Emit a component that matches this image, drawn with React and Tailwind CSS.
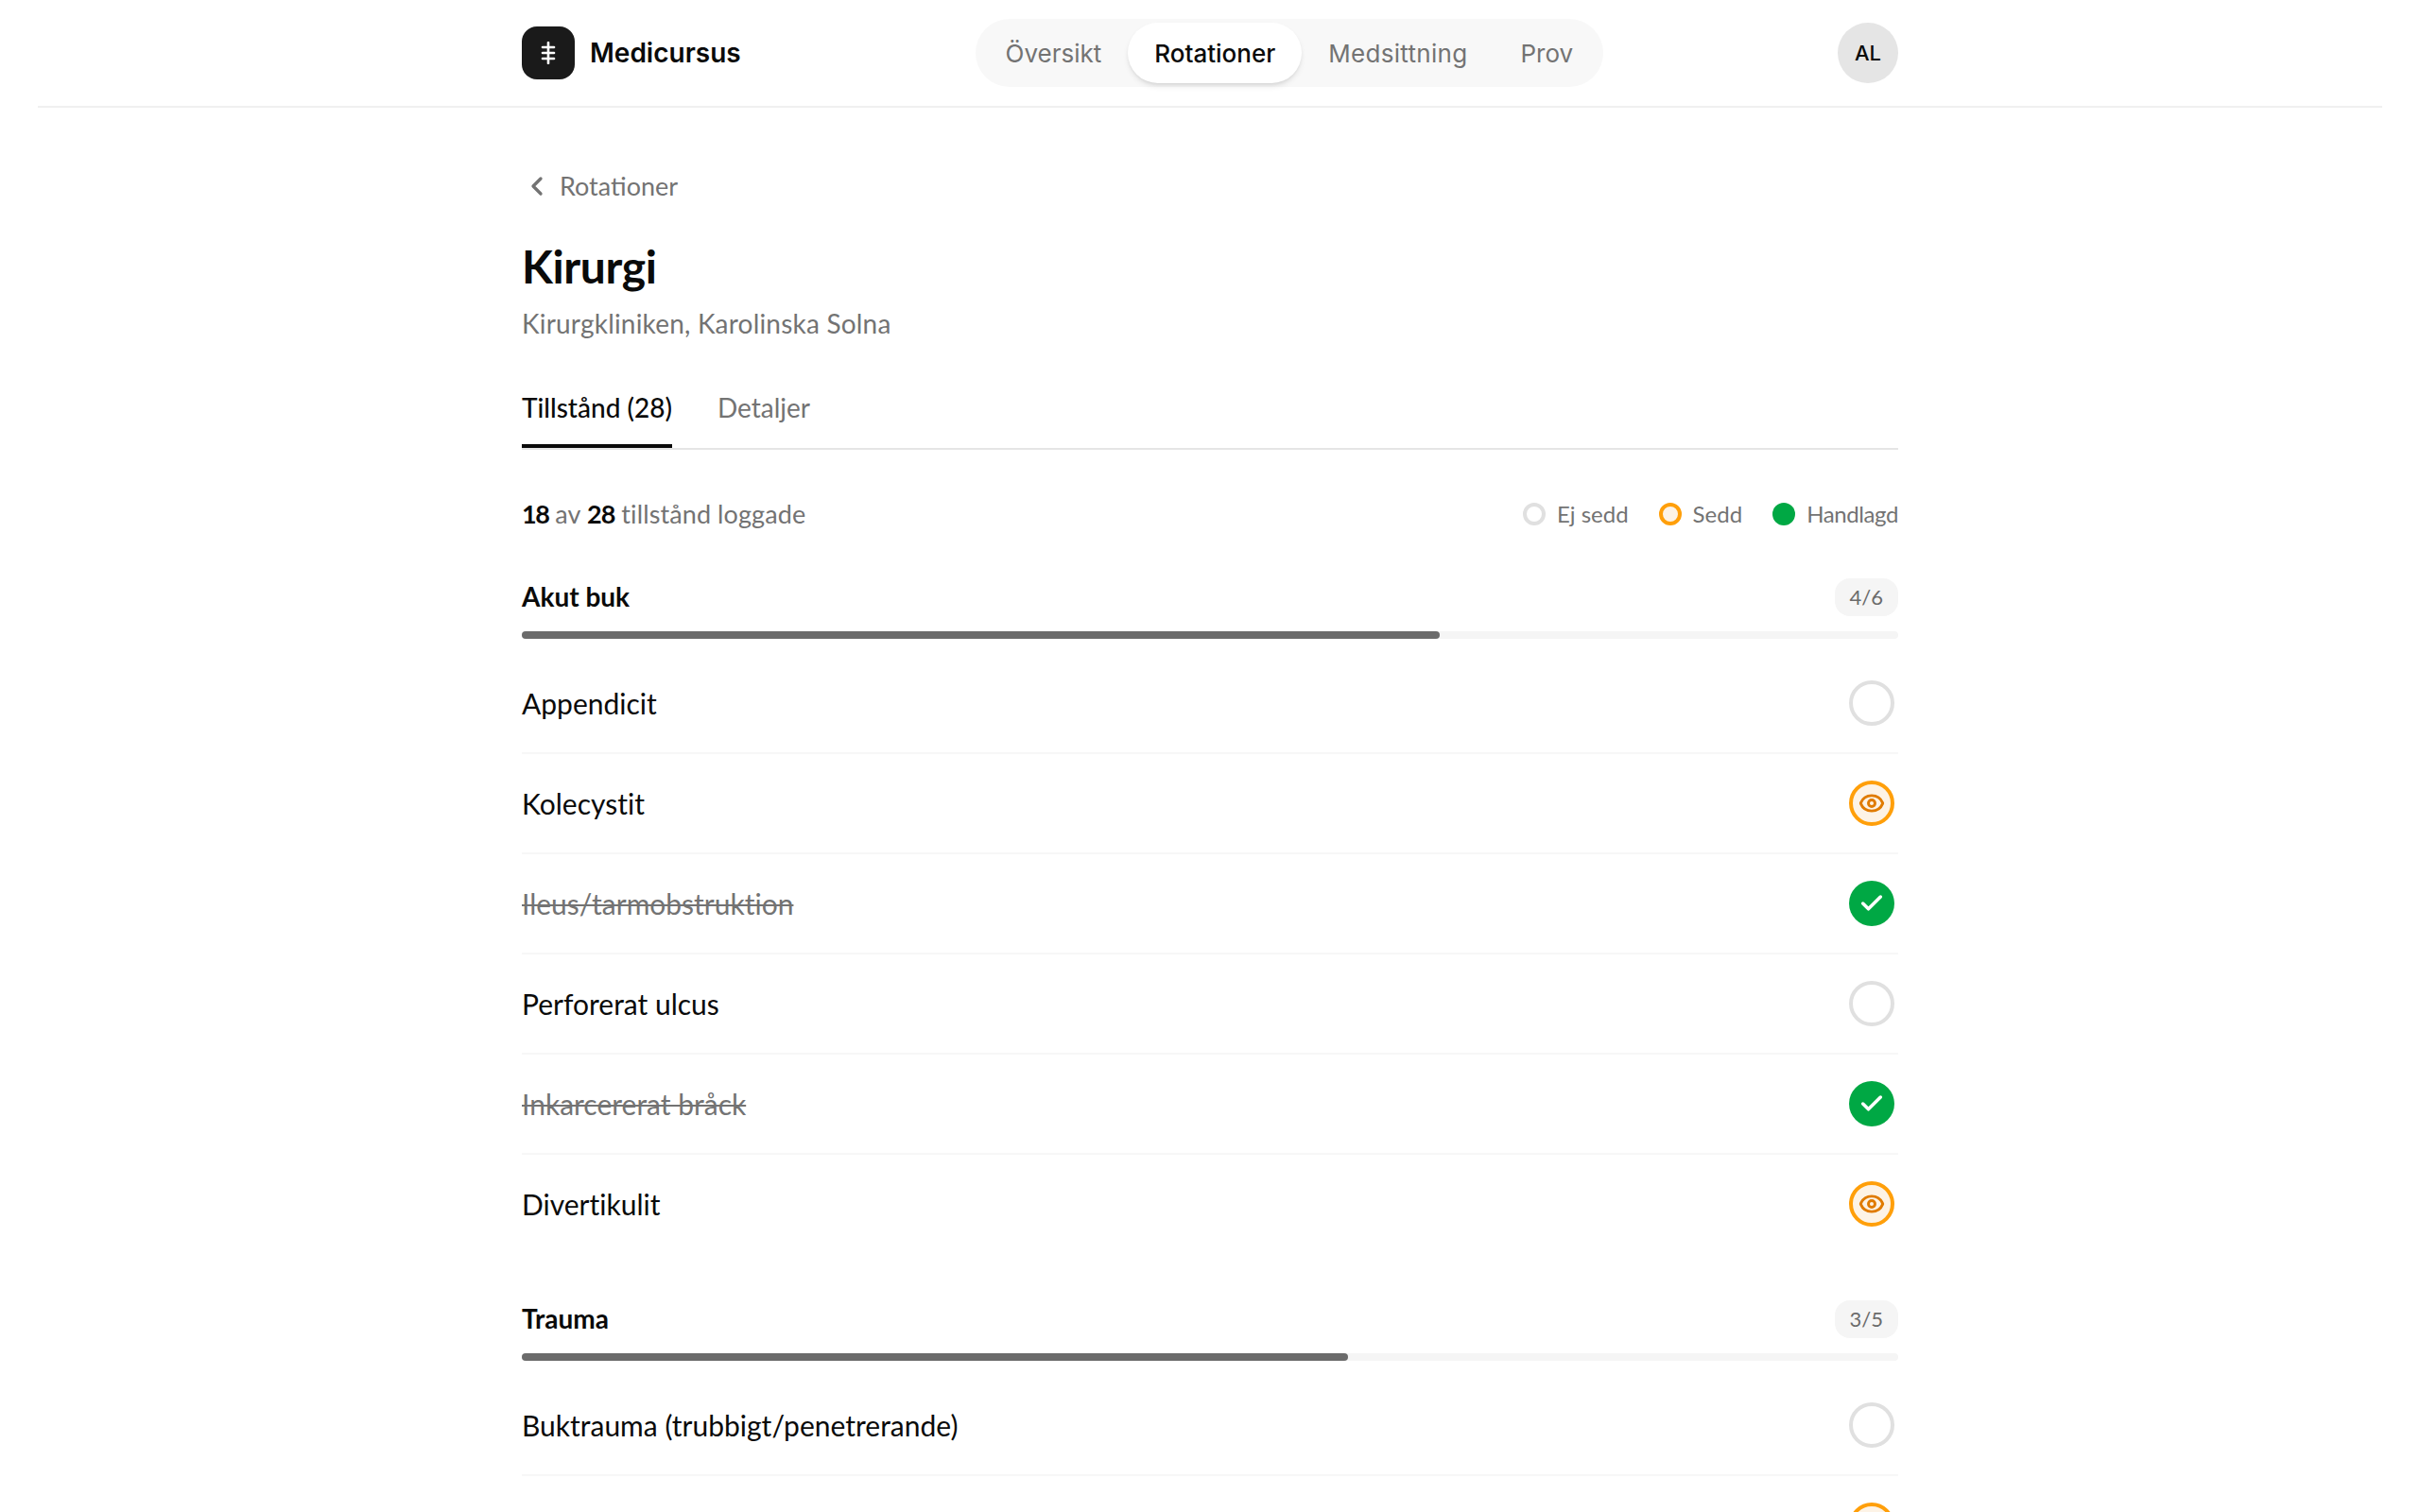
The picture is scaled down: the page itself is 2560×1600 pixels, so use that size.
import React from "react";
import { ChevronLeft, Eye, Check } from "lucide-react";

const sections = [
  {
    name: "Akut buk",
    done: "4/6",
    progress: "w-4/6",
    rows: [
      { label: "Appendicit", state: "none" },
      { label: "Kolecystit", state: "seen" },
      { label: "Ileus/tarmobstruktion", state: "done" },
      { label: "Perforerat ulcus", state: "none" },
      { label: "Inkarcererat bråck", state: "done" },
      { label: "Divertikulit", state: "seen" },
    ],
  },
  {
    name: "Trauma",
    done: "3/5",
    progress: "w-3/5",
    rows: [
      { label: "Buktrauma (trubbigt/penetrerande)", state: "none" },
      { label: "", state: "seen" },
    ],
  },
];

function StatusCircle({ state }) {
  if (state === "done") {
    return (
      <div className="w-12 h-12 rounded-full bg-[#00a844] flex items-center justify-center text-white">
        <Check size={28} strokeWidth={3} />
      </div>
    );
  }
  if (state === "seen") {
    return (
      <div className="w-12 h-12 rounded-full bg-[#fdf3e6] border-4 border-[#ff9f0a] flex items-center justify-center text-[#e07b00]">
        <Eye size={28} strokeWidth={2.5} />
      </div>
    );
  }
  return <div className="w-12 h-12 rounded-full border-4 border-[#e0e0e0]" />;
}

function Legend({ dot, label, tight }) {
  return (
    <div className="flex items-center gap-3">
      <span className={`w-6 h-6 rounded-full ${dot}`} />
      <span className={`text-[24px] leading-8 text-[#737373] ${tight ? "tracking-[-0.4px]" : ""}`}>{label}</span>
    </div>
  );
}

function Section({ section }) {
  return (
    <section className="mb-12">
      <div className="flex items-center justify-between h-10 mb-4">
        <h2 className="pb-0.5 text-[28px] leading-10 font-bold text-[#0a0a0a]">{section.name}</h2>
        <span className="h-10 flex items-center px-4 pb-0.5 rounded-2xl bg-[#f5f5f5] text-[22px] text-[#6b6b6b]">
          {section.done}
        </span>
      </div>
      <div className="h-2 rounded-full bg-[#f5f5f5] mb-4">
        <div className={`h-2 rounded-full bg-[#6b6b6b] ${section.progress}`} />
      </div>
      {section.rows.map((row, i) => (
        <div
          key={i}
          className={`flex items-center justify-between h-[106px] pr-1 border-b-2 ${
            i === section.rows.length - 1 ? "border-transparent" : "border-[#f7f7f7]"
          }`}
        >
          <span
            className={
              row.state === "done"
                ? "text-[30px] text-[#737373] line-through decoration-2 [font-variant-ligatures:none]"
                : "text-[30px] text-[#0a0a0a] [font-variant-ligatures:none]"
            }
          >
            {row.label}
          </span>
          <StatusCircle state={row.state} />
        </div>
      ))}
    </section>
  );
}

export default function App() {
  return (
    <div className="h-screen overflow-hidden bg-white font-['Lato',sans-serif]">
      <header className="mx-10 h-[114px] border-b-2 border-[#f0f0f0]">
        <div className="w-[1456px] h-full mx-auto flex items-center justify-between font-['Inter',sans-serif]">
          <div className="flex items-center gap-4">
            <div className="w-14 h-14 rounded-2xl bg-[#1a1a1a] flex items-center justify-center">
              <svg width="24" height="24" viewBox="0 0 24 24" fill="none" stroke="white" strokeWidth="2.6" strokeLinecap="round">
                <path d="M12 1v22" />
                <path d="M6 6h12" />
                <path d="M6 12h12" />
                <path d="M6 18h12" />
              </svg>
            </div>
            <span className="text-[28px] font-semibold text-[#0a0a0a]">Medicursus</span>
          </div>
          <nav className="flex items-center p-1 rounded-full bg-[#f8f8f8]">
            <a className="h-16 px-7 flex items-center text-[26px] text-[#737373]">Översikt</a>
            <a className="h-16 px-7 flex items-center rounded-full bg-white shadow-md text-[26px] font-medium text-[#0a0a0a]">
              Rotationer
            </a>
            <a className="h-16 px-7 flex items-center text-[26px] tracking-[0.3px] text-[#737373]">Medsittning</a>
            <a className="h-16 px-7 flex items-center text-[26px] text-[#737373]">Prov</a>
          </nav>
          <div className="w-16 h-16 rounded-full bg-[#e5e5e5] flex items-center justify-center text-[22px] font-medium text-[#0a0a0a]">
            AL
          </div>
        </div>
      </header>

      <main className="w-[1456px] mx-auto pt-[67px]">
        <div className="flex items-center gap-2 text-[#737373]">
          <ChevronLeft size={32} strokeWidth={2.5} />
          <span className="text-[27px] leading-8">Rotationer</span>
        </div>

        <h1 className="mt-[41px] text-[48px] leading-[56px] font-bold tracking-[-0.4px] text-[#0a0a0a]">Kirurgi</h1>
        <p className="mt-[14px] text-[28px] leading-9 tracking-[0.2px] text-[#737373]">Kirurgkliniken, Karolinska Solna</p>

        <div className="mt-[53px] flex gap-12 border-b-2 border-[#e5e5e5]">
          <div className="h-[61px] border-b-4 border-[#0a0a0a] text-[28px] leading-9 font-medium text-[#0a0a0a]">
            Tillstånd (28)
          </div>
          <div className="h-[61px] text-[28px] leading-9 text-[#737373]">Detaljer</div>
        </div>

        <div className="mt-[50px] flex items-center justify-between h-9">
          <p className="text-[27px] tracking-[0.1px] text-[#737373]">
            <span className="font-bold tracking-[-1.5px] text-[#0a0a0a]">18</span> av{" "}
            <span className="font-bold tracking-[-1px] text-[#0a0a0a]">28</span> tillstånd loggade
          </p>
          <div className="flex items-center gap-8">
            <Legend dot="bg-white border-4 border-[#e0e0e0]" label="Ej sedd" />
            <Legend dot="bg-[#fdf3e6] border-4 border-[#ff9f0a]" label="Sedd" />
            <Legend dot="bg-[#00a844]" label="Handlagd" tight />
          </div>
        </div>

        <div className="mt-[50px]">
          {sections.map((s) => (
            <Section key={s.name} section={s} />
          ))}
        </div>
      </main>
    </div>
  );
}
